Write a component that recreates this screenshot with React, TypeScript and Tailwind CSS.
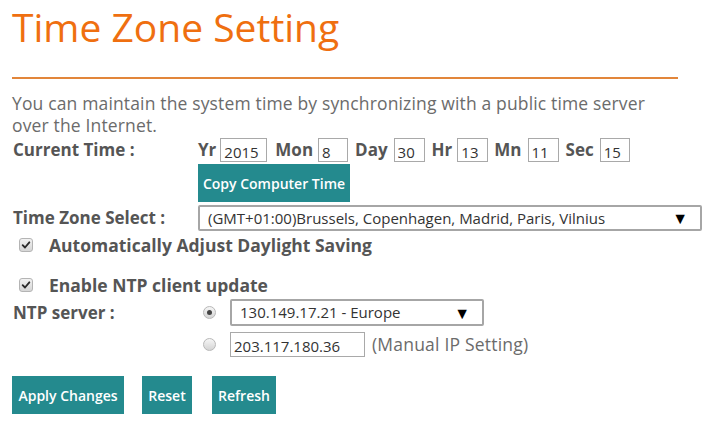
import React from 'react';

const font = { fontFamily: '"Open Sans", "Noto Sans", sans-serif' };

const Field = ({ value, width }: { value: string; width: string }) => (
  <input
    readOnly
    value={value}
    className={`h-6 ${width} border border-[#a9a9a9] bg-white px-[3px] pt-[3px] text-[15px] font-normal leading-5 text-[#333] outline-none`}
  />
);

const Check = () => (
  <span className="flex h-[14px] w-[14px] items-center justify-center rounded-[3px] border border-[#b4b4b4] bg-gradient-to-b from-[#f2f2f2] to-[#d6d6d6]">
    <svg viewBox="0 0 12 12" className="h-[10px] w-[10px]">
      <path d="M2 6.2 L4.8 9 L10 2.8" fill="none" stroke="#2b2b2b" strokeWidth="2.2" strokeLinecap="round" strokeLinejoin="round" />
    </svg>
  </span>
);

const Radio = ({ on }: { on?: boolean }) => (
  <span className="flex h-[13px] w-[13px] items-center justify-center rounded-full border border-[#b8b8b8] bg-gradient-to-b from-[#f6f6f6] to-[#d4d4d4]">
    {on && <span className="h-[5px] w-[5px] rounded-full bg-[#444]" />}
  </span>
);

const Btn = ({ children, className = '' }: { children: React.ReactNode; className?: string }) => (
  <button className={`bg-[#248a8e] text-[14px] font-semibold text-white ${className}`}>{children}</button>
);

const Dropdown = ({ text, className }: { text: string; className: string }) => (
  <div className={`flex items-center justify-between rounded-[2px] border-2 border-[#a6a6a6] bg-white pl-2 pr-3 text-[15px] text-[#333] ${className}`}>
    <span>{text}</span>
    <span className="text-[16px] text-black">▼</span>
  </div>
);

export default function App() {
  return (
    <div className="h-[426px] w-[717px] bg-white px-3" style={font}>
      <h1 className="h-[62px] pt-[2px] text-[39px] leading-[50px] text-[#ef6f10]">Time Zone Setting</h1>
      <div className="mt-[15px] h-[2px] w-[666px] bg-[#e2863a]" />
      <p className="mt-[13px] text-[17.5px] leading-[22px] tracking-[0.15px] text-[#6b6b6b]">
        You can maintain the system time by synchronizing with a public time server
        <br />
        over the Internet.
      </p>

      <div className="mt-[1px] flex h-[26px] items-center font-bold text-[#555]">
        <span className="w-[186px] pl-px text-[17px]">Current Time :</span>
        <div className="flex items-center text-[17px]">
          <span className="mr-[4px]">Yr</span>
          <Field value="2015" width="w-[47px]" />
          <span className="ml-[8px] mr-[5px]">Mon</span>
          <Field value="8" width="w-[30px]" />
          <span className="ml-[7px] mr-[6px]">Day</span>
          <Field value="30" width="w-[31px]" />
          <span className="ml-[7px] mr-[5px]">Hr</span>
          <Field value="13" width="w-[31px]" />
          <span className="ml-[6px] mr-[6px]">Mn</span>
          <Field value="11" width="w-[31px]" />
          <span className="ml-[7px] mr-[6px]">Sec</span>
          <Field value="15" width="w-[30px]" />
        </div>
      </div>

      <div className="mt-[1px] pl-[186px]">
        <Btn className="h-[38px] w-[152px]">Copy Computer Time</Btn>
      </div>

      <div className="mt-[3px] flex h-[26px] items-center">
        <span className="w-[186px] pl-px text-[17px] font-bold text-[#555]">Time Zone Select :</span>
        <Dropdown text="(GMT+01:00)Brussels, Copenhagen, Madrid, Paris, Vilnius" className="h-[26px] w-[504px]" />
      </div>

      <div className="mt-[1px] flex h-[26px] items-center gap-[16px] pl-[7px]">
        <Check />
        <span className="text-[17.5px] font-bold text-[#555]">Automatically Adjust Daylight Saving</span>
      </div>

      <div className="mt-[14px] flex h-[26px] items-center gap-[16px] pl-[7px]">
        <Check />
        <span className="text-[17.5px] font-bold text-[#555]">Enable NTP client update</span>
      </div>

      <div className="mt-[1px] flex h-[27px] items-center">
        <span className="w-[191px] pl-px text-[17px] font-bold text-[#555]">NTP server :</span>
        <Radio on />
        <Dropdown text="130.149.17.21 - Europe" className="ml-[14px] h-[27px] w-[254px]" />
      </div>

      <div className="mt-[6px] flex h-[25px] items-center">
        <span className="w-[191px]" />
        <Radio />
        <Field value="203.117.180.36" width="ml-[14px] w-[135px] !h-[25px]" />
        <span className="ml-[7px] text-[17.5px] tracking-[0.2px] text-[#6b6b6b]">(Manual IP Setting)</span>
      </div>

      <div className="mt-[19px] flex gap-[18px]">
        <Btn className="h-[38px] w-[112px]">Apply Changes</Btn>
        <Btn className="h-[38px] w-[50px]">Reset</Btn>
        <Btn className="ml-[2px] h-[38px] w-[64px]">Refresh</Btn>
      </div>
    </div>
  );
}
